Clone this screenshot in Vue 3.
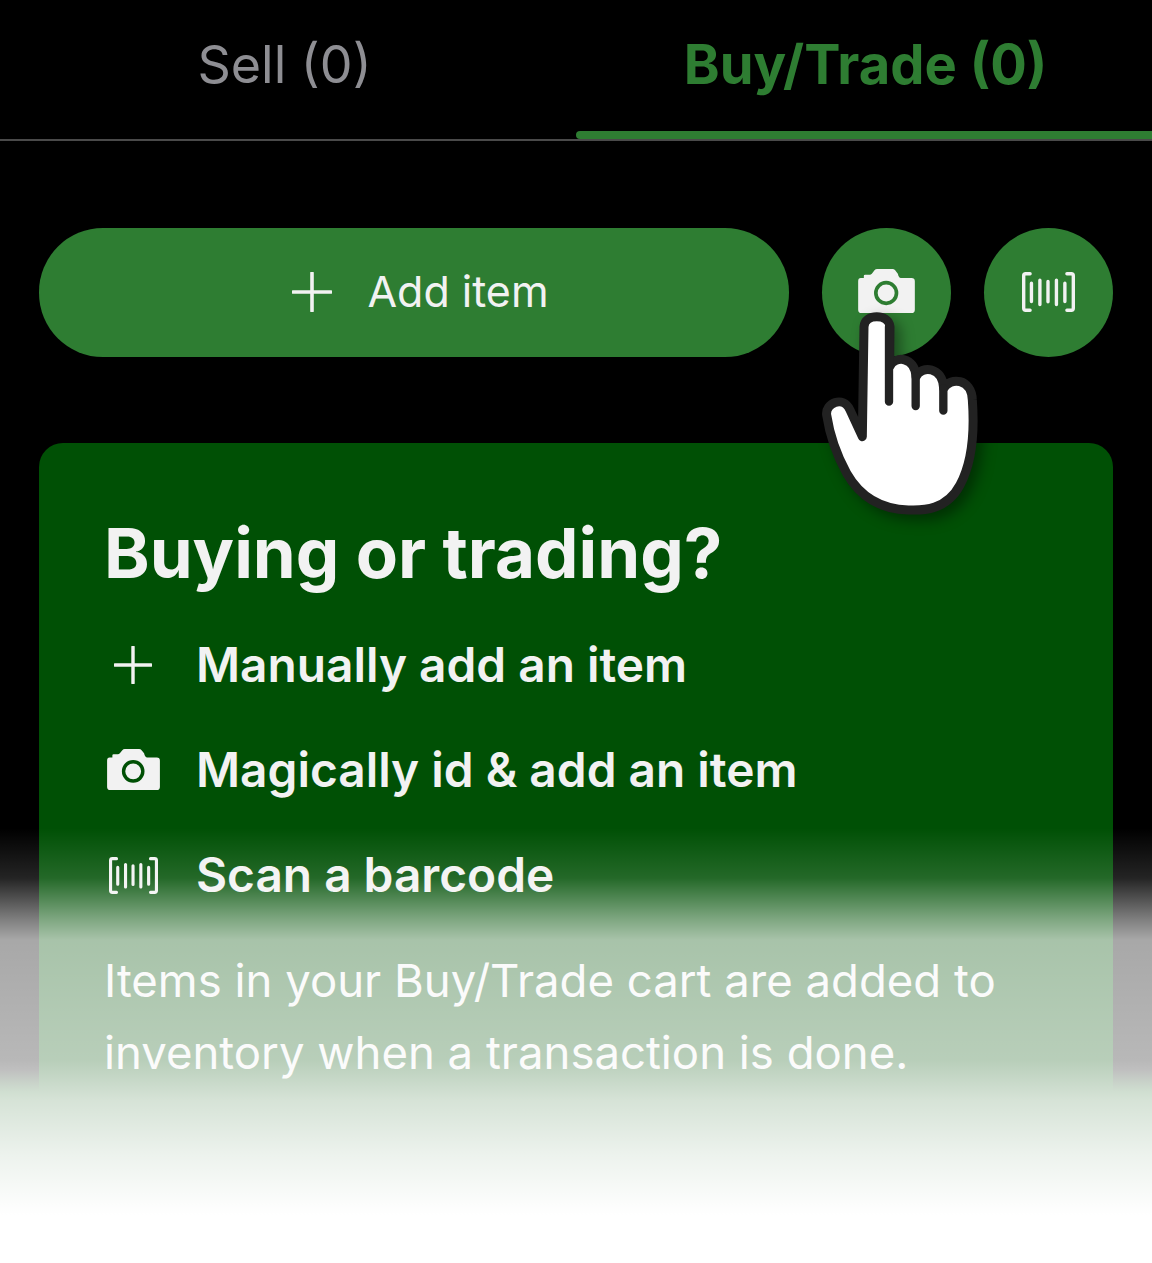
<template>
  <div class="page">
    <div class="tabs">
      <div class="tab">Sell (0)</div>
      <div class="tab active">Buy/Trade (0)</div>
    </div>

    <div class="actions">
      <button class="add-btn">
        <svg class="plus" viewBox="0 0 40 40"><path d="M20 1v38M1 20h38" /></svg>
        <span>Add item</span>
      </button>
      <button class="round-btn">
        <svg class="camera" viewBox="0 0 170 132"><use href="#cam" /></svg>
      </button>
      <button class="round-btn">
        <svg class="barcode" viewBox="0 0 157 118"><use href="#bars" /></svg>
      </button>
    </div>

    <div class="card">
      <h2>Buying or trading?</h2>
      <div v-for="row in rows" :key="row.label" class="row">
        <div class="row-icon">
          <svg v-if="row.icon === 'plus'" class="plus small" viewBox="0 0 40 40"><path d="M20 1v38M1 20h38" /></svg>
          <svg v-else-if="row.icon === 'camera'" class="camera big" viewBox="0 0 170 132"><use href="#cam" /></svg>
          <svg v-else class="barcode mid" viewBox="0 0 157 118"><use href="#bars" /></svg>
        </div>
        <span>{{ row.label }}</span>
      </div>
      <p>Items in your Buy/Trade cart are added to inventory when a transaction is done.</p>
    </div>

    <div class="fade"></div>

    <!-- hand lies over the camera button, drawn in the same box as the crop -->
    <svg class="hand" viewBox="0 0 1116 960">
      <path class="palm" d="M247 680 L252 350 C254 310 326 310 330 350 L329 470 C345 435 405 440 408 500 C425 465 488 470 491 535 C510 500 575 505 577 570 C585 680 575 760 540 825 C500 900 430 902 385 900 C300 898 240 860 200 790 C170 735 150 680 140 615 C135 580 190 555 210 600 Z" />
      <path class="line" d="M327 350 V575 M407 500 V588 M490 535 V602" />
    </svg>

    <svg width="0" height="0" class="defs">
      <defs>
        <g id="cam">
          <path fill="#f2f2f2" d="M8 27 H17 V20 Q17 17 21 17 H35 Q38 17 41 14 L49 4 Q52 0 57 0 H103 Q108 0 111 4 L119 14 Q122 27 128 27 H160 Q170 27 170 37 V122 Q170 132 160 132 H10 Q0 132 0 122 V37 Q0 27 8 27 Z" />
          <circle cx="84" cy="72" r="31" fill="none" stroke="currentColor" stroke-width="11" />
        </g>
        <g id="bars" fill="none" stroke="#f2f2f2" stroke-linecap="round" stroke-linejoin="round">
          <path stroke-width="10" d="M24 5 H11 Q5 5 5 11 V107 Q5 113 11 113 H24 M133 5 H146 Q152 5 152 11 V107 Q152 113 146 113 H133" />
          <path stroke-width="10" d="M28 33 V87 M53 24 V96 M77 28 V88 M102 24 V96 M127 33 V87" />
        </g>
      </defs>
    </svg>
  </div>
</template>

<script setup>
const rows = [
  { icon: 'plus', label: 'Manually add an item' },
  { icon: 'camera', label: 'Magically id & add an item' },
  { icon: 'barcode', label: 'Scan a barcode' },
]
</script>

<style>
html, body {
  background: #fff;
}
</style>

<style scoped>
.page {
  position: relative;
  width: 1152px;
  height: 1263px;
  overflow: hidden;
  background: linear-gradient(#000 1070px, #005005 1092px);
  font-family: Inter, "Liberation Sans", sans-serif;
  color: #f2f2f2;
}

.tabs {
  display: flex;
  height: 141px;
  border-bottom: 2px solid #4a4a4a;
  box-sizing: border-box;
}

.tab {
  flex: 0 0 50%;
  display: flex;
  align-items: center;
  justify-content: center;
  box-sizing: border-box;
  height: 129px;
  padding-right: 7px;
  font-size: 52px;
  color: #8e8e93;
}

.tab.active {
  position: relative;
  height: 139px;
  padding: 0 0 11px 3px;
  color: #2e7d32;
  font-size: 54.3px;
  font-weight: 700;
}

.tab.active::after {
  content: '';
  position: absolute;
  left: 0;
  right: 0;
  bottom: 0;
  height: 8px;
  border-radius: 4px 0 0 4px;
  background: #2e7d32;
}

.actions {
  display: flex;
  gap: 33px;
  padding: 87px 39px 0;
}

button {
  border: 0;
  padding: 0;
  font: inherit;
  color: #2e7d32;
  background: #2e7d32;
  display: flex;
  align-items: center;
  justify-content: center;
}

.add-btn {
  flex: 1;
  box-sizing: border-box;
  height: 129px;
  padding: 0 0 2px 13px;
  border-radius: 64px;
  gap: 35px;
  font-size: 43px;
  color: #f2f2f2;
}

.add-btn span {
  margin-bottom: 2px;
}

.round-btn {
  width: 129px;
  height: 129px;
  border-radius: 50%;
}

.plus {
  width: 40px;
  height: 40px;
  fill: none;
  stroke: #f2f2f2;
  stroke-width: 3.6;
  stroke-linecap: round;
}

.plus.small {
  width: 38px;
  height: 38px;
}

.camera {
  width: 57px;
  height: 44px;
  margin-bottom: 3px;
}

.camera.big {
  width: 53px;
  height: 41px;
  margin-bottom: 0;
  color: #005005;
}

.barcode {
  width: 53px;
  height: 40px;
  margin-bottom: 2px;
}

.barcode.mid {
  width: 49px;
  height: 37px;
  margin-bottom: 0;
}

.card {
  margin: 86px 39px 0;
  padding: 68px 66px 0 65px;
  height: 700px;
  border-radius: 24px;
  background: #005005;
}

h2 {
  margin: 0 0 17px;
  font-size: 69px;
  line-height: 84px;
  font-weight: 700;
}

.row {
  display: flex;
  align-items: center;
  height: 105.3px;
  font-size: 47.8px;
  font-weight: 600;
}

.row-icon {
  width: 92px;
  padding-right: 34px;
  box-sizing: border-box;
  display: flex;
  justify-content: center;
}

p {
  margin: 17px 0 0;
  font-size: 45.5px;
  line-height: 72px;
}

.fade {
  position: absolute;
  left: 0;
  right: 0;
  top: 828px;
  height: 387px;
  background: linear-gradient(to bottom,
    rgba(255, 255, 255, 0) 0,
    rgba(255, 255, 255, 0.14) 50px,
    rgba(255, 255, 255, 0.33) 72px,
    rgba(255, 255, 255, 0.5) 92px,
    rgba(255, 255, 255, 0.66) 112px,
    rgba(255, 255, 255, 0.72) 232px,
    rgba(255, 255, 255, 0.84) 272px,
    rgba(255, 255, 255, 0.93) 327px,
    #fff 387px);
}

.fade::after {
  content: '';
  position: absolute;
  left: 0;
  right: 0;
  top: 387px;
  height: 100px;
  background: #fff;
}

.hand {
  position: absolute;
  left: 780px;
  top: 210px;
  width: 372px;
  height: 320px;
  overflow: visible;
  filter: drop-shadow(6px 6px 7px rgba(0, 0, 0, 0.4));
}

.palm {
  fill: #fff;
  stroke: #222;
  stroke-width: 27;
  stroke-linejoin: round;
}

.line {
  fill: none;
  stroke: #222;
  stroke-width: 25;
  stroke-linecap: round;
}

.defs {
  position: absolute;
}
</style>
